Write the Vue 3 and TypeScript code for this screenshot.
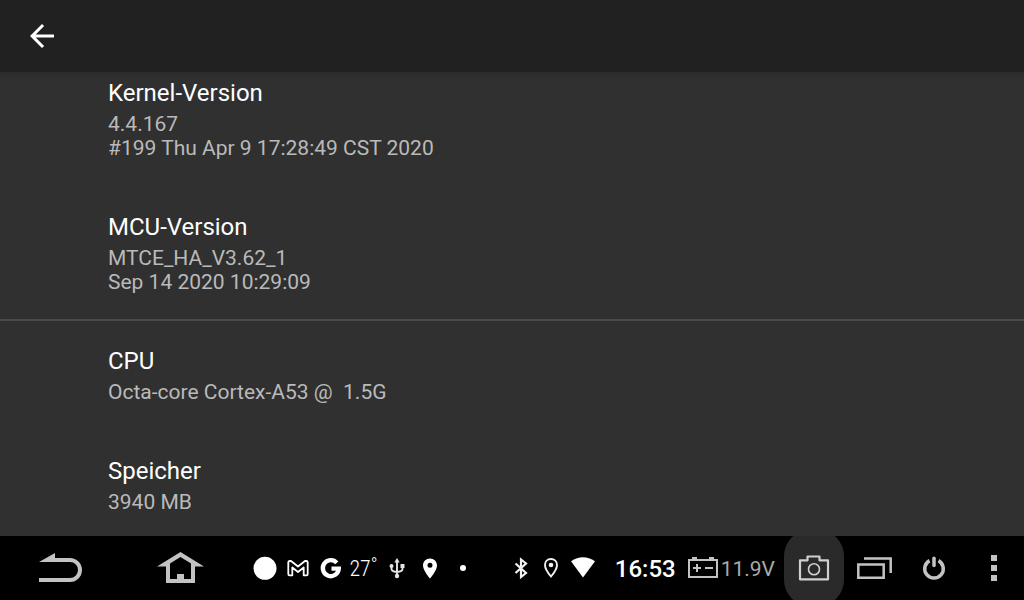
<script setup lang="ts">
interface InfoItem {
  title: string
  lines: string[]
  divided?: boolean
}

const items: InfoItem[] = [
  { title: 'Kernel-Version', lines: ['4.4.167', '#199 Thu Apr 9 17:28:49 CST 2020'] },
  { title: 'MCU-Version', lines: ['MTCE_HA_V3.62_1', 'Sep 14 2020 10:29:09'], divided: true },
  { title: 'CPU', lines: ['Octa-core Cortex-A53 @  1.5G'] },
  { title: 'Speicher', lines: ['3940 MB'] },
]
</script>

<template>
  <div class="screen">
    <header class="app-bar">
      <button type="button" class="up" aria-label="Nach oben">
        <svg width="36" height="36" viewBox="0 0 24 24" fill="#fff">
          <path d="M20 11H7.83l5.59-5.59L12 4l-8 8 8 8 1.41-1.41L7.83 13H20z" />
        </svg>
      </button>
    </header>

    <main class="list">
      <section v-for="item in items" :key="item.title" class="item" :class="{ divided: item.divided }">
        <h2 class="title">{{ item.title }}</h2>
        <p v-for="line in item.lines" :key="line" class="summary">{{ line }}</p>
      </section>
    </main>

    <footer class="system-bar">
      <button type="button" class="nav" aria-label="Zurück">
        <svg width="48" height="36" viewBox="0 0 48 36">
          <path d="M3 12L19 3V8H26V12z" fill="#c3c3c3" />
          <path d="M18 10H34A10 10 0 0 1 34 30H3" fill="none" stroke="#c3c3c3" stroke-width="4" />
        </svg>
      </button>
      <button type="button" class="nav" aria-label="Startseite">
        <svg width="48" height="36" viewBox="0 0 48 36">
          <path
            fill="#c3c3c3"
            fill-rule="evenodd"
            d="M24.500 2L48 16.500H39V33H10V16.500H1zM24.500 7L14 13.500V29H21V24H28V29H35V13.500z"
          />
        </svg>
      </button>

      <div class="notifications">
        <span class="cell">
          <svg width="24" height="24" viewBox="0 0 24 24"><circle cx="12" cy="12.300" r="11.500" fill="#fff" /></svg>
        </span>
        <span class="cell">
          <svg width="24" height="24" viewBox="0 0 24 24">
            <path
              d="M2.300 18V6.500Q2.300 5 3.800 5H5L12 10.500L19 5H20.200Q21.700 5 21.700 6.500V18Q21.700 19.300 20.500 19.300H17.700V11.500L12 16L6.300 11.500V19.300H3.500Q2.300 19.300 2.300 18z"
              fill="none"
              stroke="#fff"
              stroke-width="1.800"
              stroke-linejoin="round"
            />
          </svg>
        </span>
        <span class="cell">
          <svg width="24" height="24" viewBox="0 0 24 24">
            <path d="M17.800 6.900A8 8 0 1 0 19.800 12.700H12.500" fill="none" stroke="#fff" stroke-width="4.300" />
          </svg>
        </span>
        <span class="cell temperature">27<span class="degree">°</span></span>
        <span class="cell">
          <svg width="24" height="24" viewBox="0 0 24 24" fill="#e4e4e4" stroke="#e4e4e4">
            <path d="M12 4V20M6.500 10V13Q6.500 15.500 12 16Q17.500 15.500 17.500 13V9" fill="none" stroke-width="1.900" />
            <path d="M12 2L14.700 6.500H9.300z" stroke="none" />
            <circle cx="6.500" cy="10" r="2" stroke="none" />
            <path d="M15.500 8H19.500V12H15.500z" stroke="none" />
            <circle cx="12" cy="20" r="2.200" stroke="none" />
          </svg>
        </span>
        <span class="cell">
          <svg width="24" height="24" viewBox="0 0 24 24">
            <path
              fill="#fff"
              fill-rule="evenodd"
              d="M12 2.500C8 2.500 5 5.500 5 9.500C5 14.500 12 22.500 12 22.500S19 14.500 19 9.500C19 5.500 16 2.500 12 2.500zM12 6.800A2.500 2.500 0 1 1 12 11.800A2.500 2.500 0 0 1 12 6.800z"
            />
          </svg>
        </span>
        <span class="cell">
          <svg width="24" height="24" viewBox="0 0 24 24"><circle cx="12" cy="12" r="3" fill="#fff" /></svg>
        </span>
      </div>

      <div class="status">
        <svg width="24" height="24" viewBox="0 0 24 24">
          <path
            d="M6.500 7.500L17 17L12 21V3.500L17 7.500L6.500 17"
            fill="none"
            stroke="#f2f2f2"
            stroke-width="2.200"
          />
        </svg>
        <svg width="24" height="24" viewBox="0 0 24 24">
          <path
            d="M12 3C8.500 3 6 5.500 6 9C6 13.500 12 20.500 12 20.500S18 13.500 18 9C18 5.500 15.500 3 12 3z"
            fill="none"
            stroke="#f2f2f2"
            stroke-width="1.900"
          />
          <circle cx="12" cy="9" r="2.300" fill="#f2f2f2" />
        </svg>
        <svg width="28" height="24" viewBox="0 0 28 24">
          <path d="M2 5.300Q14 -3 26 5.300L14 21.500z" fill="#fff" />
        </svg>
        <time class="clock">16:53</time>
        <span class="battery">
          <svg width="30" height="24" viewBox="0 0 30 24">
            <rect x="1" y="4" width="28" height="17" fill="none" stroke="#c3c3c3" stroke-width="2" />
            <path d="M4 1H9V4H4zM21 1H26V4H21z" fill="#c3c3c3" />
            <path d="M5 12H13M9 8V16M17 12H25" stroke="#c3c3c3" stroke-width="2" />
          </svg>
          <span class="voltage">11.9V</span>
        </span>
      </div>

      <button type="button" class="tool pressed" aria-label="Bildschirmfoto">
        <svg width="36" height="36" viewBox="0 0 36 36" fill="none" stroke="#d0d0d0">
          <path d="M4 10.300H11.500V6.500H23.500V10.300H32V29.300H4z" stroke-width="2.200" stroke-linejoin="round" />
          <circle cx="18" cy="19.300" r="5.500" stroke-width="1.600" />
        </svg>
      </button>
      <button type="button" class="tool" aria-label="Letzte Apps">
        <svg width="36" height="36" viewBox="0 0 36 36" fill="none" stroke="#c3c3c3" stroke-width="2.500">
          <path d="M2.300 14.500H27.700V27.700H2.300zM8 8.500H34.700V23" />
        </svg>
      </button>
      <button type="button" class="tool" aria-label="Ein/Aus">
        <svg width="36" height="36" viewBox="0 0 36 36" fill="none" stroke="#c3c3c3">
          <path d="M13.500 10.600A9.300 9.300 0 1 0 22.500 10.600" stroke-width="3.500" />
          <path d="M18 8.300V15.500" stroke-width="3.500" stroke-linecap="round" />
        </svg>
      </button>
      <button type="button" class="tool" aria-label="Menü">
        <svg width="36" height="36" viewBox="0 0 36 36" fill="#c3c3c3">
          <path d="M15 5H21V11H15zM15 15H21V21H15zM15 25H21V31H15z" />
        </svg>
      </button>
    </footer>
  </div>
</template>

<style>
body {
  margin: 0;
  background: #303030;
}
</style>

<style scoped>
.screen {
  display: flex;
  flex-direction: column;
  height: 100vh;
  overflow: hidden;
  background: #303030;
  color: #fff;
  font-family: Roboto, "Noto Sans", sans-serif;
}

button {
  display: flex;
  align-items: center;
  justify-content: center;
  padding: 0;
  border: 0;
  background: none;
}

svg {
  display: block;
  flex: none;
}

.app-bar {
  display: flex;
  flex: none;
  align-items: center;
  height: 72px;
  padding: 0 24px;
  background: #212121;
}

.list {
  flex: 1;
  min-height: 0;
  overflow-y: auto;
  scrollbar-width: none;
  background: linear-gradient(#2b2b2b, #303030 6px);
}

.item {
  padding: 26px 24px 25px 108px;
  border-bottom: 2px solid transparent;
}

.item:first-child {
  padding-top: 7px;
}

.item.divided {
  border-bottom-color: #4a4a4a;
}

.title {
  margin: 0 0 5px;
  font-size: 24px;
  font-weight: 400;
  line-height: 28px;
}

.summary {
  margin: 0;
  color: #bababa;
  font-size: 21px;
  line-height: 24px;
  white-space: pre-wrap;
}

.system-bar {
  display: flex;
  flex: none;
  height: 64px;
  background: #000;
}

.nav {
  flex: none;
  width: 120px;
}

.notifications {
  display: flex;
  flex: 1;
  align-items: center;
  padding-left: 8px;
}

.cell {
  display: flex;
  flex: none;
  align-items: center;
  justify-content: center;
  width: 33px;
}

.temperature {
  padding-top: 2px;
  font-family: "Roboto Condensed", "Liberation Sans Narrow", Roboto, sans-serif;
  font-size: 22px;
  font-weight: 300;
  line-height: 24px;
}

.degree {
  align-self: flex-start;
  font-size: 18px;
  line-height: 16px;
}

.status {
  display: flex;
  flex: none;
  align-items: center;
  gap: 6px;
  padding-right: 9px;
}

.clock {
  padding-top: 2px;
  margin: 0 6px 0 12px;
  font-size: 24px;
  font-weight: 500;
  line-height: 28px;
}

.battery {
  display: flex;
  align-items: center;
  gap: 3px;
  color: #aaa;
  font-size: 21px;
  line-height: 28px;
}

.voltage {
  padding-top: 2px;
}

.tool {
  position: relative;
  flex: none;
  width: 60px;
  overflow: hidden;
}

.tool svg {
  position: relative;
}

.pressed::before {
  position: absolute;
  inset: -6px 0;
  border-radius: 26px;
  background: #2a2a2a;
  content: "";
}
</style>
